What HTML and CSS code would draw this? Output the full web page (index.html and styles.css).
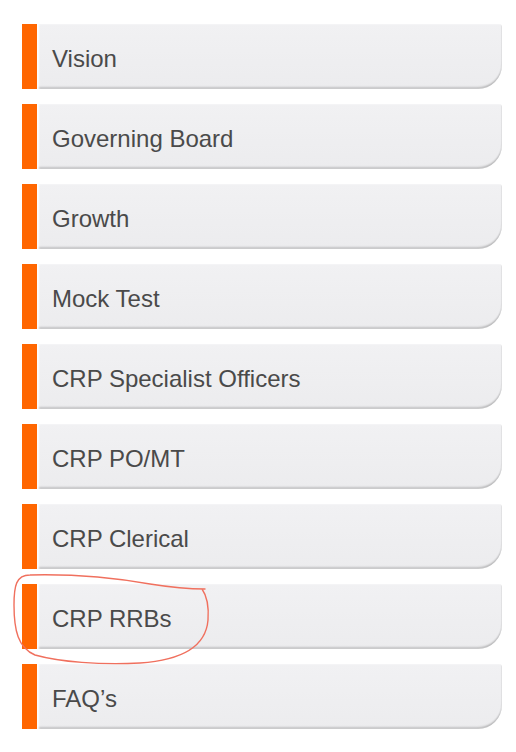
FILE: index.html
```html
<!DOCTYPE html>
<html lang="en">
<head>
<meta charset="utf-8">
<title>Menu</title>
<link rel="stylesheet" href="styles.css">
</head>
<body>
<nav class="menu">
  <a class="item" href="#">Vision</a>
  <a class="item" href="#">Governing Board</a>
  <a class="item" href="#">Growth</a>
  <a class="item" href="#">Mock Test</a>
  <a class="item" href="#">CRP Specialist Officers</a>
  <a class="item" href="#">CRP PO/MT</a>
  <a class="item" href="#">CRP Clerical</a>
  <a class="item" href="#">CRP RRBs</a>
  <a class="item" href="#">FAQ’s</a>
</nav>
<svg class="annotation" width="516" height="752" viewBox="0 0 516 752" aria-hidden="true">
  <path d="M 202 589 C 207 596, 209 606, 208 620 C 206 645, 185 660, 140 663 C 100 665, 60 662, 35 655 C 18 648, 14 630, 14 605 C 14 586, 16 575, 30 575 C 70 574, 110 577, 150 584 C 175 588, 193 589, 205 589" fill="none" stroke="#f0705e" stroke-width="1.4" stroke-linecap="round"/>
</svg>
</body>
</html>
```
FILE: styles.css
```css
html, body {
  margin: 0;
  padding: 0;
  background: #ffffff;
}
body {
  width: 516px;
  height: 752px;
  position: relative;
  overflow: hidden;
  font-family: "Liberation Sans", Arial, Helvetica, sans-serif;
}
.menu {
  display: flex;
  flex-direction: column;
  gap: 15px;
  padding: 24px 14px 0 22px;
}
.item {
  display: flex;
  align-items: center;
  box-sizing: border-box;
  height: 65px;
  padding: 4px 0 0 15px;
  border-left: 15px solid #ff6600;
  border-radius: 0 3px 24px 0;
  background: linear-gradient(180deg, #f1f1f3 0%, #eeeef0 60%, #ececee 100%);
  box-shadow: inset 2px 0 2px rgba(255, 255, 255, 0.95), inset 0 -3px 2px -1px rgba(0, 0, 0, 0.18), inset -1px -1px 1px rgba(0, 0, 0, 0.06);
  color: #4a4a4a;
  font-size: 24px;
  text-decoration: none;
  line-height: 1;
}
.annotation {
  position: absolute;
  top: 0;
  left: 0;
  pointer-events: none;
}
```
